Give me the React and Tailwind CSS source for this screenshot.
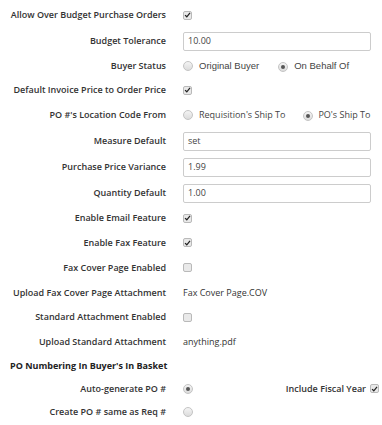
import React from "react";

const font = { fontFamily: "'Open Sans', 'Liberation Sans', sans-serif" };

function Check({ checked }) {
  return (
    <span className="inline-flex h-[9px] w-[9px] items-center justify-center rounded-[2px] border border-[#b9b9b9] bg-[#e9e9e9]">
      {checked && (
        <svg viewBox="0 0 10 10" className="h-[8px] w-[8px]">
          <path d="M1.5 5.2 L4 7.6 L8.6 2" fill="none" stroke="#222" strokeWidth="1.8" />
        </svg>
      )}
    </span>
  );
}

function Radio({ checked }) {
  return (
    <span className="inline-flex h-[10px] w-[10px] shrink-0 items-center justify-center rounded-full border border-[#c4c4c4] bg-gradient-to-b from-[#f4f4f4] to-[#dcdcdc]">
      {checked && <span className="h-[4px] w-[4px] rounded-full bg-[#555]" />}
    </span>
  );
}

function TextInput({ value }) {
  return (
    <div className="flex h-[19px] w-[188px] items-center rounded-[2px] border border-[#cccccc] bg-white px-[4px] text-[9px] text-[#444]">
      {value}
    </div>
  );
}

function Row({ h, label, children }) {
  return (
    <div className={`flex items-center ${h}`}>
      <div className="w-[167px] shrink-0 whitespace-nowrap pr-px text-right text-[9px] font-semibold text-[#333]">{label}</div>
      <div className="ml-[16px] flex flex-1 items-center whitespace-nowrap">{children}</div>
    </div>
  );
}

export default function App() {
  return (
    <div className="h-[425px] w-[382px] overflow-hidden bg-white pt-[2px] text-[#333]" style={font}>
      <Row h="h-[26px]" label="Allow Over Budget Purchase Orders">
        <Check checked />
      </Row>
      <Row h="h-[26px]" label="Budget Tolerance">
        <TextInput value="10.00" />
      </Row>
      <Row h="h-[24px]" label="Buyer Status">
        <div className="flex items-center text-[9.5px] text-[#444]" style={{ fontFamily: "'Liberation Sans', Arial, sans-serif" }}>
          <Radio />
          <span className="ml-[6px]">Original Buyer</span>
          <span className="ml-[19px]"><Radio checked /></span>
          <span className="ml-[6px]">On Behalf Of</span>
        </div>
      </Row>
      <Row h="h-[24px]" label="Default Invoice Price to Order Price">
        <Check checked />
      </Row>
      <Row h="h-[26px]" label="PO #'s Location Code From">
        <div className="flex items-center text-[9px] text-[#444]">
          <Radio />
          <span className="ml-[6px]">Requisition's Ship To</span>
          <span className="ml-[18px]"><Radio checked /></span>
          <span className="ml-[5px]">PO's Ship To</span>
        </div>
      </Row>
      <Row h="h-[26px]" label="Measure Default">
        <TextInput value="set" />
      </Row>
      <Row h="h-[26px]" label="Purchase Price Variance">
        <TextInput value="1.99" />
      </Row>
      <Row h="h-[26px]" label="Quantity Default">
        <TextInput value="1.00" />
      </Row>
      <Row h="h-[24px]" label="Enable Email Feature">
        <Check checked />
      </Row>
      <Row h="h-[25px]" label="Enable Fax Feature">
        <Check checked />
      </Row>
      <Row h="h-[25px]" label="Fax Cover Page Enabled">
        <Check />
      </Row>
      <Row h="h-[25px]" label="Upload Fax Cover Page Attachment">
        <span className="text-[9px] text-[#333]">Fax Cover Page.COV</span>
      </Row>
      <Row h="h-[24px]" label="Standard Attachment Enabled">
        <Check />
      </Row>
      <Row h="h-[25px]" label="Upload Standard Attachment">
        <span className="text-[9px] text-[#333]">anything.pdf</span>
      </Row>
      <div className="flex h-[23px] items-center pl-[10px] text-[9px] font-bold text-[#222]">
        PO Numbering In Buyer's In Basket
      </div>
      <Row h="h-[23px]" label="Auto-generate PO #">
        <Radio checked />
        <div className="ml-auto mr-[3px] flex items-center gap-[4px]">
          <span className="text-[9px] font-semibold text-[#333]">Include Fiscal Year</span>
          <Check checked />
        </div>
      </Row>
      <Row h="h-[24px]" label="Create PO # same as Req #">
        <Radio />
      </Row>
    </div>
  );
}
